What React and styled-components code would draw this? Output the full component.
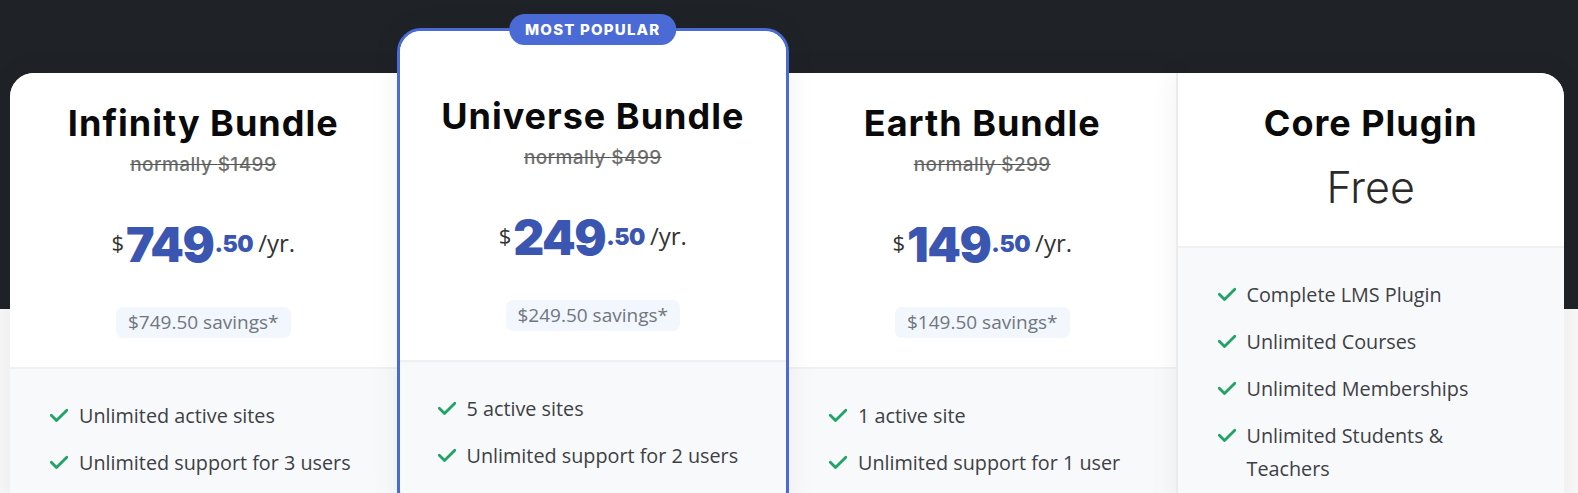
import React from 'react'
import styled, {createGlobalStyle, css} from 'styled-components'

const GlobalStyle = createGlobalStyle`
  * { box-sizing: border-box; }
  body {
    margin: 0;
    font-family: "Open Sans", "Noto Sans", sans-serif;
    background: #f8f8f8;
  }
`

const plans = [
    {
        name: 'Infinity Bundle',
        normally: '$1499',
        amount: '749',
        cents: '.50',
        savings: '$749.50 savings*',
        features: ['Unlimited active sites', 'Unlimited support for 3 users']
    },
    {
        name: 'Universe Bundle',
        normally: '$499',
        amount: '249',
        cents: '.50',
        savings: '$249.50 savings*',
        popular: true,
        features: ['5 active sites', 'Unlimited support for 2 users']
    },
    {
        name: 'Earth Bundle',
        normally: '$299',
        amount: '149',
        cents: '.50',
        savings: '$149.50 savings*',
        features: ['1 active site', 'Unlimited support for 1 user']
    },
    {
        name: 'Core Plugin',
        free: true,
        features: ['Complete LMS Plugin', 'Unlimited Courses', 'Unlimited Memberships', 'Unlimited Students & Teachers']
    }
]

const Page = styled.div`
    min-height: 493px;
    background: linear-gradient(#1f2327 0, #1f2327 309px, #f8f8f8 309px);
    padding: 28px 14px 0 10px;
    overflow: hidden;
`

const Row = styled.div`
    display: flex;
    align-items: flex-start;
`

// only the outer corners of the row are rounded
const radius = {
    first: '24px 0 0 0',
    last: '0 24px 0 0',
    middle: '0'
}

const Card = styled.div`
    position: relative;
    flex: 1 1 0;
    background: #f8f9fb;
    border-radius: ${p => radius[p.$edge]};
    box-shadow: 0 0 30px rgba(0, 0, 0, 0.06);
    margin-top: 45px;
    ${p => p.$popular && css`
        z-index: 2;
        margin-top: 0;
        border: 3px solid #4a6bd5;
        border-radius: 24px;
    `}
    ${p => p.$bordered && css`
        border-left: 2px solid #ebebeb;
    `}
`

const Badge = styled.div`
    position: absolute;
    top: -17px;
    left: 50%;
    transform: translateX(-50%);
    height: 31px;
    padding: 0 16px;
    border-radius: 16px;
    background: #4a6bd5;
    color: #fff;
    font-family: Inter, sans-serif;
    font-weight: 800;
    font-size: 15px;
    letter-spacing: 1.2px;
    line-height: 31px;
    white-space: nowrap;
`

const Header = styled.div`
    background: #fff;
    border-radius: inherit;
    text-align: center;
    padding: ${p => p.$popular ? '63px' : '28px'} 20px ${p => p.$free ? '34px' : '29px'};
    border-bottom: 2px solid #eef0f3;
    ${p => p.$popular && css`
        border-radius: 21px 21px 0 0;
    `}
`

const Title = styled.h2`
    margin: 0;
    font-family: Inter, sans-serif;
    font-weight: 700;
    font-size: 36px;
    line-height: 44px;
    letter-spacing: 1px;
    color: #0a0a0a;
`

const Normally = styled.div`
    margin-top: 8px;
    font-family: Inter, sans-serif;
    font-weight: 500;
    font-size: 19px;
    line-height: 24px;
    letter-spacing: 0.4px;
    color: #6f6f6f;
    text-decoration: line-through;
    text-decoration-color: #555;
`

const Free = styled.div`
    margin-top: 17px;
    font-family: Inter, sans-serif;
    font-weight: 300;
    font-size: 43px;
    line-height: 50px;
    color: #2a2a2a;
`

const Price = styled.div`
    margin-top: 44px;
    line-height: 1;
    white-space: nowrap;
`

const Currency = styled.span`
    display: inline-block;
    vertical-align: 11px;
    font-size: 22px;
    color: #333;
    margin-right: 2px;
`

const Amount = styled.span`
    font-family: Inter, sans-serif;
    font-weight: 900;
    font-size: 48px;
    letter-spacing: -1.5px;
    color: #3a56b0;
`

const Cents = styled.span`
    display: inline-block;
    vertical-align: 10px;
    margin-left: 1px;
    font-family: Inter, sans-serif;
    font-weight: 900;
    font-size: 23px;
    letter-spacing: -0.5px;
    color: #3a56b0;
`

const Per = styled.span`
    display: inline-block;
    vertical-align: 10px;
    margin-left: 5px;
    font-size: 24px;
    color: #333;
`

const Savings = styled.div`
    display: inline-block;
    margin-top: 38px;
    padding: 0 12px;
    height: 31px;
    line-height: 31px;
    border-radius: 7px;
    background: #f2f6fd;
    color: #707780;
    font-size: 19px;
`

const Features = styled.ul`
    list-style: none;
    margin: 0;
    padding: 30px 40px 40px 40px;
    display: flex;
    flex-direction: column;
    gap: 14px;
    ${p => p.$popular && css`
        padding-left: 38px;
    `}
`

const Feature = styled.li`
    display: flex;
    align-items: flex-start;
    gap: 11px;
    font-size: 19.8px;
    line-height: 33px;
    color: #3d4045;
`

const Check = styled.svg`
    flex: none;
    width: 18px;
    height: 33px;
`

const CheckIcon = () => (
    <Check viewBox="0 0 18 33">
        <path d="M1.3 16.3 L6.5 21.6 L16.8 11.2" fill="none" stroke="#20a466" strokeWidth="2.8" strokeLinecap="round" strokeLinejoin="round" />
    </Check>
)

class App extends React.Component {
    render(){
        return(
            <Page>
                <GlobalStyle />
                <Row>
                    {plans.map((plan, i) =>
                        <Card
                            key={plan.name}
                            $popular={plan.popular}
                            $bordered={plan.free}
                            $edge={i === 0 ? 'first' : i === plans.length - 1 ? 'last' : 'middle'}
                        >
                            {plan.popular && <Badge>MOST POPULAR</Badge>}
                            <Header $popular={plan.popular} $free={plan.free}>
                                <Title>{plan.name}</Title>
                                {plan.free ?
                                    <Free>Free</Free>
                                    :
                                    <>
                                        <Normally>normally {plan.normally}</Normally>
                                        <Price>
                                            <Currency>$</Currency>
                                            <Amount>{plan.amount}</Amount>
                                            <Cents>{plan.cents}</Cents>
                                            <Per>/yr.</Per>
                                        </Price>
                                        <Savings>{plan.savings}</Savings>
                                    </>
                                }
                            </Header>
                            <Features $popular={plan.popular}>
                                {plan.features.map(f =>
                                    <Feature key={f}>
                                        <CheckIcon />
                                        <span>{f}</span>
                                    </Feature>
                                )}
                            </Features>
                        </Card>
                    )}
                </Row>
            </Page>
        )
    }
}

export default App
